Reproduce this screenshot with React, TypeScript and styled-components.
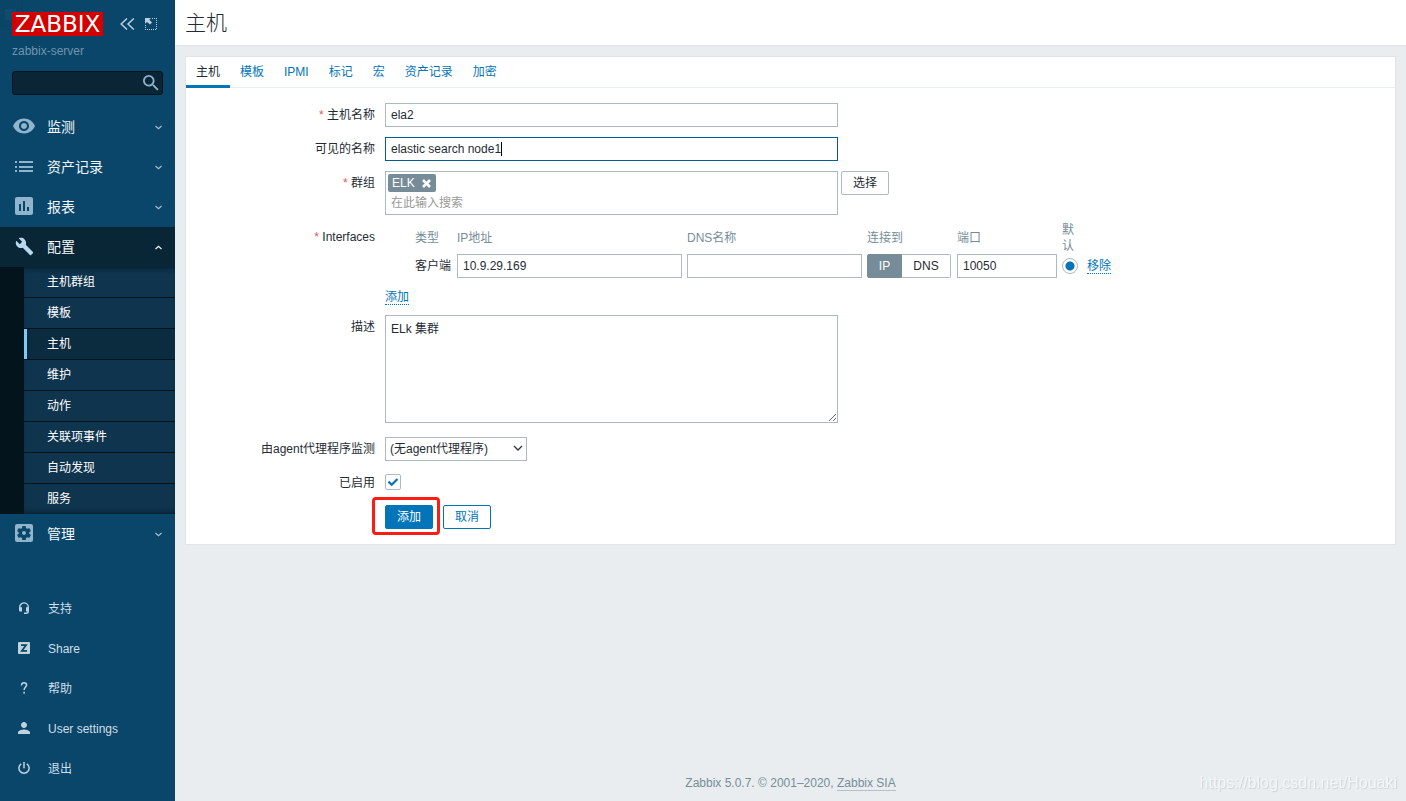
import React from "react";
import styled, { createGlobalStyle, css } from "styled-components";
import {
  MdAssessment,
  MdBuild,
  MdPerson,
  MdSearch,
  MdSettingsApplications,
  MdVisibility,
} from "react-icons/md";

const GlobalStyle = createGlobalStyle`
  *, *::before, *::after { box-sizing: border-box; }
  body {
    margin: 0;
    background: #e9edf0;
    color: #1f2c33;
    font: 12px/16px "Liberation Sans", Arial, "Noto Sans CJK SC", sans-serif;
  }
  input, button, select, textarea { font: inherit; color: inherit; margin: 0; }
  ul { list-style: none; margin: 0; padding: 0; }
`;

const Layout = styled.div`
  display: flex;
  min-height: 100vh;
`;

/* ---------- Sidebar ---------- */

const Sidebar = styled.aside`
  position: relative;
  display: flex;
  flex-direction: column;
  flex: none;
  width: 175px;
  padding-bottom: 12px;
  background: #0a466a;
`;

const CornerMark = styled.span`
  position: absolute;
  top: 0;
  left: 0;
  width: 23px;
  height: 27px;
  border: 1px solid #0c4165;
  border-width: 0 1px 1px 0;
  background: #0a4467;
  &::before {
    content: "";
    position: absolute;
    left: 5px;
    top: 9px;
    width: 11px;
    height: 11px;
    background: #104a6d;
  }
`;

const SidebarHeader = styled.div`
  position: relative;
  padding: 12px;
`;

const LogoRow = styled.div`
  display: flex;
  align-items: center;
  height: 24px;
`;

const Logo = styled.a`
  width: 91px;
  background: #d40000;
  color: #fff;
  font: 23px/24px "DejaVu Sans", sans-serif;
  text-align: center;
  text-decoration: none;
`;

const IconButton = styled.button`
  display: flex;
  padding: 0;
  border: 0;
  background: none;
  color: #b8d0df;
  cursor: pointer;
`;

const HeaderActions = styled.div`
  display: flex;
  align-items: center;
  gap: 10px;
  margin-left: 17px;
`;

const ServerName = styled.div`
  margin-top: 7px;
  color: #6f95ac;
`;

const SearchBox = styled.form`
  display: flex;
  align-items: center;
  height: 24px;
  margin-top: 12px;
  padding-right: 3px;
  border: 1px solid #03141f;
  border-radius: 3px;
  background: #0a2636;
`;

const SearchInput = styled.input`
  flex: 1;
  min-width: 0;
  height: 22px;
  padding: 0 5px;
  border: 0;
  outline: 0;
  background: transparent;
  color: #fff;
`;

const MenuIcon = styled.i`
  display: flex;
  justify-content: center;
  width: 24px;
  margin: 0 11px 2px 0;
`;

const MenuLink = styled.a<{ $open?: boolean }>`
  display: flex;
  align-items: center;
  height: 40px;
  padding: 0 13px 0 12px;
  font-size: 14px;
  color: #f2f6f8;
  text-decoration: none;
  background: ${(p) => (p.$open ? "#092637" : "transparent")};
  > span { flex: 1; }
  > svg { color: ${(p) => (p.$open ? "#f2f6f8" : "#a5bfd0")}; }
  ${MenuIcon} { color: ${(p) => (p.$open ? "#b9d8ee" : "#8fb4cb")}; }
`;

const SubMenu = styled.ul`
  border-left: 24px solid #04141d;
  background: #0f344e;
  box-shadow: inset 0 6px 6px -6px #04141d, inset 0 -6px 6px -6px #04141d;
`;

const SubItem = styled.li`
  & + & { border-top: 1px solid #04141d; }
`;

const SubLink = styled.a<{ $active?: boolean }>`
  display: block;
  padding-left: ${(p) => (p.$active ? 20 : 23)}px;
  line-height: 30px;
  color: #fff;
  text-decoration: none;
  ${(p) =>
    p.$active &&
    css`
      border-left: 3px solid #7fc8fa;
      background: #0b2b3f;
    `}
`;

const UserMenu = styled.ul`
  margin-top: auto;
`;

const UserLink = styled.a`
  display: flex;
  align-items: center;
  gap: 18px;
  height: 40px;
  padding-left: 18px;
  color: #cfdfe8;
  text-decoration: none;
  > svg { color: #c0d2dd; margin-bottom: 2px; }
`;

/* ---------- Page ---------- */

const Page = styled.div`
  display: flex;
  flex: 1;
  flex-direction: column;
  min-width: 0;
`;

const PageHeader = styled.header`
  height: 46px;
  padding: 0 10px;
  border-bottom: 1px solid #dfe4e7;
  background: #fff;
`;

const Title = styled.h1`
  margin: 0;
  font-size: 21px;
  line-height: 45px;
  font-weight: 300;
`;

const Main = styled.main`
  flex: 1;
  padding: 10px;
`;

const Card = styled.div`
  padding-bottom: 15px;
  border: 1px solid #dfe4e7;
  background: #fff;
`;

const Tabs = styled.nav`
  display: flex;
  height: 31px;
  border-bottom: 1px solid #ebeef0;
`;

const Tab = styled.a<{ $active?: boolean }>`
  height: 31px;
  padding: 0 10px;
  line-height: 30px;
  color: ${(p) => (p.$active ? "#1f2c33" : "#0275b8")};
  text-decoration: none;
  border-bottom: ${(p) => (p.$active ? "3px solid #0275b8" : "0")};
`;

const Form = styled.form`
  padding-top: 5px;
`;

const Row = styled.div<{ $tight?: boolean }>`
  display: grid;
  grid-template-columns: 189px minmax(0, 1fr);
  column-gap: 10px;
  margin-top: ${(p) => (p.$tight ? 6 : 10)}px;
`;

const labelStyle = css<{ $required?: boolean }>`
  line-height: 24px;
  text-align: right;
  ${(p) =>
    p.$required &&
    css`
      &::before { content: "* "; color: #e45959; }
    `}
`;

const Label = styled.label<{ $required?: boolean }>`
  ${labelStyle}
`;

const GroupLabel = styled.span<{ $required?: boolean }>`
  ${labelStyle}
  padding-top: 4px;
`;

const Field = styled.div`
  display: flex;
  align-items: flex-start;
  gap: 3px;
`;

const InputWrap = styled.div`
  position: relative;
  width: 453px;
`;

const Caret = styled.span`
  position: absolute;
  left: 116px;
  top: 5px;
  width: 1px;
  height: 14px;
  background: #000;
`;

const TextInput = styled.input<{ $focused?: boolean }>`
  display: block;
  width: 100%;
  height: 24px;
  padding: 0 5px;
  border: 1px solid ${(p) => (p.$focused ? "#015d93" : "#acbbc2")};
  border-radius: 0;
  outline: 0;
  background: #fff;
`;

const MultiSelect = styled.div`
  width: 453px;
  height: 44px;
  padding: 2px;
  border: 1px solid #acbbc2;
`;

const Tag = styled.span`
  display: inline-flex;
  align-items: center;
  gap: 7px;
  height: 18px;
  padding: 0 5px 0 4px;
  border-radius: 2px;
  background: #768d99;
  color: #fff;
  vertical-align: top;
`;

const TagRemove = styled(IconButton)`
  color: #fff;
`;

const MultiInput = styled.input`
  display: block;
  width: 100%;
  height: 22px;
  padding: 0 3px;
  border: 0;
  outline: 0;
  background: transparent;
  &::placeholder { color: #999; opacity: 1; }
`;

const Button = styled.button<{ $kind?: "primary" | "outline" }>`
  height: 24px;
  padding: 0 11px;
  border: 1px solid ${(p) => (p.$kind ? "#0275b8" : "#acbbc2")};
  border-radius: 2px;
  background: ${(p) => (p.$kind === "primary" ? "#0275b8" : "#fff")};
  color: ${(p) =>
    p.$kind === "primary" ? "#fff" : p.$kind ? "#0275b8" : "#1f2c33"};
  line-height: 22px;
  cursor: pointer;
`;

const Actions = styled(Field)`
  gap: 10px;
`;

const Highlight = styled.div`
  position: relative;
  &::after {
    content: "";
    position: absolute;
    inset: -8px -7px -6px -13px;
    border: 3px solid #fb1d13;
    border-radius: 4px;
    pointer-events: none;
  }
`;

const Interfaces = styled.table`
  table-layout: fixed;
  width: 742px;
  border-collapse: collapse;
  th {
    height: 33px;
    padding: 0;
    color: #768d99;
    font-weight: 400;
    line-height: 16px;
    text-align: left;
  }
  th:nth-child(7) { padding-right: 8px; }
  td {
    height: 24px;
    padding: 0 5px 0 0;
  }
  td:nth-child(2), td:last-child { padding: 0; }
`;

const DottedLink = styled.a`
  border-bottom: 1px dotted #0275b8;
  color: #0275b8;
  text-decoration: none;
`;

const AddLine = styled.div`
  margin-top: 7px;
  line-height: 24px;
`;

const Segmented = styled.div`
  display: flex;
  width: 84px;
`;

const Segment = styled.label<{ $on?: boolean }>`
  flex: ${(p) => (p.$on ? "0 0 35px" : "1")};
  height: 24px;
  border: 1px solid ${(p) => (p.$on ? "#768d99" : "#acbbc2")};
  border-radius: ${(p) => (p.$on ? "2px 0 0 2px" : "0 2px 2px 0")};
  border-left-width: ${(p) => (p.$on ? 1 : 0)}px;
  background: ${(p) => (p.$on ? "#768d99" : "#fff")};
  color: ${(p) => (p.$on ? "#fff" : "#1f2c33")};
  line-height: 22px;
  text-align: center;
  input { position: absolute; opacity: 0; pointer-events: none; }
`;

const Radio = styled.input`
  display: block;
  appearance: none;
  width: 16px;
  height: 16px;
  border: 1px solid #acbbc2;
  border-radius: 50%;
  background: #fff;
  &:checked { background: radial-gradient(circle, #0275b8 4px, #fff 5px); }
`;

const TextArea = styled.textarea`
  display: block;
  width: 453px;
  height: 108px;
  margin-bottom: 4px;
  padding: 5px;
  border: 1px solid #acbbc2;
  outline: 0;
  resize: both;
`;

const SelectWrap = styled.div`
  position: relative;
  width: 142px;
  > svg { position: absolute; right: 4px; top: 8px; pointer-events: none; }
`;

const Select = styled.select`
  appearance: none;
  display: block;
  width: 100%;
  height: 24px;
  padding: 0 18px 0 4px;
  border: 1px solid #acbbc2;
  border-radius: 0;
  background: #fff;
`;

const CheckWrap = styled.div`
  position: relative;
  display: flex;
  align-items: center;
  height: 24px;
  padding-bottom: 2px;
  > svg { position: absolute; left: 2px; top: 6px; pointer-events: none; }
`;

const Checkbox = styled.input`
  appearance: none;
  width: 16px;
  height: 16px;
  border: 1px solid #acbbc2;
  border-radius: 2px;
  background: #fff;
`;

const Footer = styled.footer`
  padding: 10px;
  color: #768d99;
  text-align: center;
  a {
    color: inherit;
    text-decoration: none;
    border-bottom: 1px solid #b5c1c8;
  }
`;

const Watermark = styled.div`
  position: fixed;
  right: 9px;
  bottom: 9px;
  color: #f3f5f7;
  font-size: 16px;
  line-height: 18px;
  text-shadow: 1px 1px 1px #cfd4d7;
`;

/* ---------- Icons ---------- */

const Chevron = ({ up }: { up?: boolean }) => (
  <svg width="7" height="5" viewBox="0 0 7 5" fill="none" stroke="currentColor" strokeWidth="1.2">
    <path d={up ? "M.5 4 3.5 1.2 6.5 4" : "M.5 1 3.5 3.8 6.5 1"} />
  </svg>
);

const CollapseIcon = () => (
  <svg width="15" height="12" viewBox="0 0 15 12" fill="none" stroke="currentColor" strokeWidth="1.5">
    <path d="M7 .5 1.2 6 7 11.5M13.8.5 8 6l5.8 5.5" />
  </svg>
);

const KioskIcon = () => (
  <svg width="12" height="12" viewBox="0 0 12 12" fill="currentColor">
    <path d="M0 0h6L4.300 1.700 7 4.500 5 6.500 2 3.900 0 5.700z" />
    <path
      d="M7 .5h5M11.500 2v10M0 11.500h11M.5 7v4"
      fill="none"
      stroke="currentColor"
      strokeDasharray="1 1"
    />
  </svg>
);

const ListIcon = () => (
  <svg width="24" height="24" viewBox="0 0 24 24" fill="currentColor">
    <path d="M3 7h2v2H3zM3 12h2v2H3zM3 16h2v2H3zM7 7h14v2H7zM7 12h14v2H7zM7 16h14v2H7z" />
  </svg>
);

const CrossIcon = () => (
  <svg width="9" height="9" viewBox="0 0 9 9" stroke="currentColor" strokeWidth="2.6">
    <path d="M1 1l7 7M8 1 1 8" />
  </svg>
);

const SupportIcon = () => (
  <svg width="12" height="12" viewBox="0 0 12 12" fill="currentColor">
    <path
      d="M1.700 6V5.200a4.300 4.300 0 0 1 8.600 0V9c0 1.500-.8 2.200-2 2.200H6"
      fill="none"
      stroke="currentColor"
      strokeWidth="1.4"
    />
    <path d="M1 5.200h3v4.300H2.200Q1 9.500 1 8.300zM11 5.200H8v4.300h1.800q1.200 0 1.200-1.200z" />
  </svg>
);

const ShareIcon = () => (
  <svg width="12" height="12" viewBox="0 0 12 12">
    <rect width="12" height="12" rx="1" fill="currentColor" />
    <path d="M3 3.200h5L3.900 8.800H9" fill="none" stroke="#0a466a" strokeWidth="1.8" />
  </svg>
);

const HelpIcon = () => (
  <svg width="12" height="12" viewBox="0 0 12 12" fill="none" stroke="currentColor" strokeWidth="1.5">
    <path d="M3.500 3.500C3.500 1.800 4.500.8 6 .8s2.600.9 2.600 2.300C8.600 5 6.100 5.200 6.100 8" />
    <path d="M6.100 9.800v1.900" />
  </svg>
);

const PowerIcon = () => (
  <svg width="12" height="12" viewBox="0 0 12 12" fill="none" stroke="currentColor" strokeWidth="1.5">
    <path d="M6 0v6.200M3.200 1.800a5.100 5.100 0 1 0 5.600 0" />
  </svg>
);

/* ---------- Data ---------- */

const topMenu = [
  { text: "监测", icon: <MdVisibility size={24} /> },
  { text: "资产记录", icon: <ListIcon /> },
  { text: "报表", icon: <MdAssessment size={24} /> },
];

const subMenu = ["主机群组", "模板", "主机", "维护", "动作", "关联项事件", "自动发现", "服务"];

const userMenu = [
  { text: "支持", icon: <SupportIcon /> },
  { text: "Share", icon: <ShareIcon /> },
  { text: "帮助", icon: <HelpIcon /> },
  { text: "User settings", icon: <MdPerson size={12} viewBox="4 4 16 16" /> },
  { text: "退出", icon: <PowerIcon /> },
];

const tabs = ["主机", "模板", "IPMI", "标记", "宏", "资产记录", "加密"];

const columnWidths = [30, 42, 230, 180, 90, 105, 25, 40];

const MenuEntry = ({ text, icon, open }: { text: string; icon: React.ReactNode; open?: boolean }) => (
  <MenuLink href="#" $open={open}>
    <MenuIcon>{icon}</MenuIcon>
    <span>{text}</span>
    <Chevron up={open} />
  </MenuLink>
);

export default function App() {
  return (
    <Layout>
      <GlobalStyle />
      <Sidebar>
        <CornerMark />
        <SidebarHeader>
          <LogoRow>
            <Logo href="#">ZABBIX</Logo>
            <HeaderActions>
              <IconButton type="button" aria-label="Collapse sidebar">
                <CollapseIcon />
              </IconButton>
              <IconButton type="button" aria-label="Kiosk mode">
                <KioskIcon />
              </IconButton>
            </HeaderActions>
          </LogoRow>
          <ServerName>zabbix-server</ServerName>
          <SearchBox>
            <SearchInput type="text" aria-label="Search" />
            <IconButton type="button" aria-label="Search">
              <MdSearch size={16} viewBox="3 3 18 18" color="#8fb4cb" />
            </IconButton>
          </SearchBox>
        </SidebarHeader>

        <nav>
          {topMenu.map((m) => (
            <MenuEntry key={m.text} {...m} />
          ))}
          <MenuEntry text="配置" icon={<MdBuild size={19} />} open />
          <SubMenu>
            {subMenu.map((text, i) => (
              <SubItem key={text}>
                <SubLink href="#" $active={i === 2}>
                  {text}
                </SubLink>
              </SubItem>
            ))}
          </SubMenu>
          <MenuEntry text="管理" icon={<MdSettingsApplications size={24} />} />
        </nav>

        <UserMenu>
          {userMenu.map((m) => (
            <li key={m.text}>
              <UserLink href="#">
                {m.icon}
                {m.text}
              </UserLink>
            </li>
          ))}
        </UserMenu>
      </Sidebar>

      <Page>
        <PageHeader>
          <Title>主机</Title>
        </PageHeader>
        <Main>
          <Card>
            <Tabs>
              {tabs.map((t, i) => (
                <Tab key={t} href="#" $active={i === 0}>
                  {t}
                </Tab>
              ))}
            </Tabs>
            <Form>
              <Row>
                <Label htmlFor="host" $required>主机名称</Label>
                <InputWrap>
                  <TextInput id="host" defaultValue="ela2" />
                </InputWrap>
              </Row>
              <Row>
                <Label htmlFor="visible">可见的名称</Label>
                <InputWrap>
                  <TextInput id="visible" defaultValue="elastic search node1" $focused />
                  <Caret />
                </InputWrap>
              </Row>
              <Row>
                <Label htmlFor="groups" $required>群组</Label>
                <Field>
                  <MultiSelect>
                    <Tag>
                      ELK
                      <TagRemove type="button" aria-label="Remove ELK">
                        <CrossIcon />
                      </TagRemove>
                    </Tag>
                    <MultiInput id="groups" placeholder="在此输入搜索" />
                  </MultiSelect>
                  <Button type="button">选择</Button>
                </Field>
              </Row>
              <Row $tight>
                <GroupLabel $required>Interfaces</GroupLabel>
                <div>
                  <Interfaces>
                    <colgroup>
                      {columnWidths.map((w, i) => (
                        <col key={i} width={w} />
                      ))}
                    </colgroup>
                    <thead>
                      <tr>
                        <th />
                        <th>类型</th>
                        <th>IP地址</th>
                        <th>DNS名称</th>
                        <th>连接到</th>
                        <th>端口</th>
                        <th>默认</th>
                        <th />
                      </tr>
                    </thead>
                    <tbody>
                      <tr>
                        <td />
                        <td>客户端</td>
                        <td>
                          <TextInput aria-label="IP地址" defaultValue="10.9.29.169" />
                        </td>
                        <td>
                          <TextInput aria-label="DNS名称" />
                        </td>
                        <td>
                          <Segmented>
                            <Segment $on>
                              <input type="radio" name="connect" defaultChecked />
                              IP
                            </Segment>
                            <Segment>
                              <input type="radio" name="connect" />
                              DNS
                            </Segment>
                          </Segmented>
                        </td>
                        <td>
                          <TextInput aria-label="端口" defaultValue="10050" />
                        </td>
                        <td>
                          <Radio type="radio" name="default" aria-label="默认" defaultChecked />
                        </td>
                        <td>
                          <DottedLink href="#">移除</DottedLink>
                        </td>
                      </tr>
                    </tbody>
                  </Interfaces>
                  <AddLine>
                    <DottedLink href="#">添加</DottedLink>
                  </AddLine>
                </div>
              </Row>
              <Row $tight>
                <Label htmlFor="description">描述</Label>
                <Field>
                  <TextArea id="description" defaultValue="ELk 集群" />
                </Field>
              </Row>
              <Row>
                <Label htmlFor="proxy">由agent代理程序监测</Label>
                <SelectWrap>
                  <Select id="proxy">
                    <option>(无agent代理程序)</option>
                  </Select>
                  <svg width="10" height="7" viewBox="0 0 10 7" fill="none" stroke="#333" strokeWidth="1.3">
                    <path d="M1 1l4 4 4-4" />
                  </svg>
                </SelectWrap>
              </Row>
              <Row>
                <Label htmlFor="enabled">已启用</Label>
                <CheckWrap>
                  <Checkbox id="enabled" type="checkbox" defaultChecked />
                  <svg width="12" height="10" viewBox="0 0 12 10" fill="none" stroke="#0275b8" strokeWidth="2.2">
                    <path d="M1.500 4.600 4.700 7.700 10.500 2" />
                  </svg>
                </CheckWrap>
              </Row>
              <Row>
                <span />
                <Actions>
                  <Highlight>
                    <Button type="button" $kind="primary">添加</Button>
                  </Highlight>
                  <Button type="button" $kind="outline">取消</Button>
                </Actions>
              </Row>
            </Form>
          </Card>
        </Main>
        <Footer>
          Zabbix 5.0.7. © 2001–2020, <a href="#">Zabbix SIA</a>
        </Footer>
      </Page>
      <Watermark>https://blog.csdn.net/Houaki</Watermark>
    </Layout>
  );
}
